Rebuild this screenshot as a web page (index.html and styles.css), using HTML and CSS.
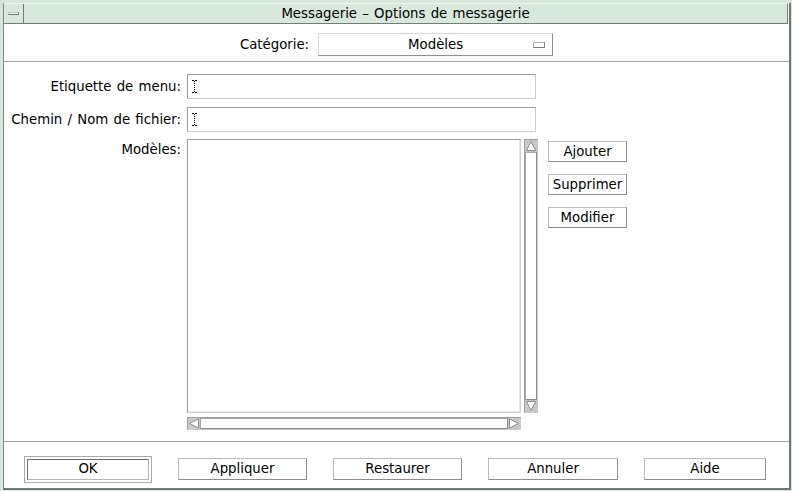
FILE: index.html
```html
<!DOCTYPE html>
<html lang="fr">
<head>
<meta charset="utf-8">
<title>Messagerie – Options de messagerie</title>
<link rel="stylesheet" href="styles.css">
</head>
<body>
<div class="window">
  <div class="panel">
    <div class="titlebar">
      <div class="menu-btn"><span class="dash"></span></div>
      <div class="title">Messagerie – Options de messagerie</div>
    </div>

    <div class="category-row">
      <span class="cat-label">Catégorie:</span>
      <div class="dropdown">
        <span class="dd-text">Modèles</span>
        <span class="dd-icon"></span>
      </div>
    </div>

    <div class="sep"></div>

    <div class="form">
      <div class="label row1">Etiquette de menu:</div>
      <div class="field row1"><svg class="ibeam" width="5" height="13" viewBox="0 0 5 13"><path d="M0 0h2v1H0zM3 0h2v1H3zM2 1h1v1H2zM2 3h1v1H2zM2 5h1v1H2zM2 7h1v1H2zM2 9h1v1H2zM2 11h1v1H2zM0 12h2v1H0zM3 12h2v1H3z" fill="#000"/></svg></div>

      <div class="label">Chemin / Nom de fichier:</div>
      <div class="field"><svg class="ibeam" width="5" height="13" viewBox="0 0 5 13"><path d="M0 0h2v1H0zM3 0h2v1H3zM2 1h1v1H2zM2 3h1v1H2zM2 5h1v1H2zM2 7h1v1H2zM2 9h1v1H2zM2 11h1v1H2zM0 12h2v1H0zM3 12h2v1H3z" fill="#000"/></svg></div>

      <div class="label label-top">Modèles:</div>
      <div class="list-row">
        <div class="lists">
          <div class="listbox"></div>
          <div class="vscroll">
            <div class="arrow-v"><svg width="12" height="12" viewBox="0 0 12 12"><polygon points="6,1.5 10.5,10.5 1.5,10.5" fill="#fff" stroke="#8e8e8e" stroke-width="1"/></svg></div>
            <div class="thumb-v"></div>
            <div class="arrow-v"><svg width="12" height="12" viewBox="0 0 12 12"><polygon points="1.5,1.5 10.5,1.5 6,10.5" fill="#fff" stroke="#8e8e8e" stroke-width="1"/></svg></div>
          </div>
          <div class="hscroll">
            <div class="arrow-h"><svg width="12" height="11" viewBox="0 0 12 11"><polygon points="1.5,5.5 10.5,1 10.5,10" fill="#fff" stroke="#8e8e8e" stroke-width="1"/></svg></div>
            <div class="thumb-h"></div>
            <div class="arrow-h"><svg width="12" height="11" viewBox="0 0 12 11"><polygon points="1.5,1 10.5,5.5 1.5,10" fill="#fff" stroke="#8e8e8e" stroke-width="1"/></svg></div>
          </div>
        </div>
        <div class="side-buttons">
          <button class="btn side">Ajouter</button>
          <button class="btn side">Supprimer</button>
          <button class="btn side">Modifier</button>
        </div>
      </div>
    </div>

    <div class="sep"></div>

    <div class="actions">
      <div class="default-ring"><button class="btn ok">OK</button></div>
      <button class="btn w129">Appliquer</button>
      <button class="btn w129">Restaurer</button>
      <button class="btn w130">Annuler</button>
      <button class="btn w122">Aide</button>
    </div>
  </div>
</div>
</body>
</html>
```

FILE: styles.css
```css
* { box-sizing: border-box; }

html, body {
  margin: 0;
  padding: 0;
  background: #d7e6da;
}

body {
  font-family: "DejaVu Sans", "Liberation Sans", sans-serif;
  font-size: 13.3px;
  word-spacing: 1px;
  color: #000;
}

.window {
  width: 792px;
  height: 491px;
  background: #d7e6da;
  padding: 3px 1px 1px 3px;
  display: flex;
}

.panel {
  flex: 1;
  display: flex;
  flex-direction: column;
  background: #fff;
  border-left: 1px solid #7f8c83;
  border-right: 2px solid #6d7a71;
  border-bottom: 2px solid #6d7a71;
}

/* Title bar */
.titlebar {
  height: 21px;
  display: flex;
  background: #d9e8dc;
  border-top: 1px solid #eef5ef;
  border-bottom: 1px solid #6f7d74;
  border-right: 1px solid #6f7d74;
  margin-right: 1px;
}

.menu-btn {
  width: 20px;
  border-right: 1px solid #6f7d74;
  display: flex;
  align-items: center;
  justify-content: center;
}

.dash {
  width: 11px;
  height: 3px;
  background: #f4f8f5;
  border-bottom: 1px solid #6f7d74;
  border-right: 1px solid #6f7d74;
  border-top: 1px solid #b9c7bd;
  border-left: 1px solid #b9c7bd;
}

.title {
  flex: 1;
  text-align: center;
  line-height: 19px;
  white-space: nowrap;
}

/* Category */
.category-row {
  height: 37px;
  padding: 9px 0 5px;
  display: flex;
  justify-content: center;
  align-items: center;
  gap: 9px;
}

.dropdown {
  width: 235px;
  height: 23px;
  display: flex;
  align-items: center;
  border: 1px solid;
  border-color: #d8d8d8 #8f8f8f #8f8f8f #d8d8d8;
  padding-left: 19px;
}

.dd-text {
  flex: 1;
  text-align: center;
}

.dd-icon {
  width: 12px;
  height: 6px;
  margin-right: 7px;
  border: 1px solid;
  border-color: #b0b0b0 #7c7c7c #7c7c7c #b0b0b0;
  background: #fff;
}

.sep {
  height: 1px;
  background: #a3a3a3;
  flex: none;
}

/* Form */
.form {
  flex: 1;
  padding-top: 12px;
  display: grid;
  grid-template-columns: 177px auto;
  grid-auto-rows: auto;
  column-gap: 6px;
  row-gap: 7px;
  align-content: start;
  align-items: center;
  overflow: hidden;
}

.row1 { margin-bottom: 1px; }

.label {
  text-align: right;
  white-space: nowrap;
}

.label-top {
  align-self: start;
  padding-top: 3px;
}

.field {
  width: 349px;
  height: 25px;
  border: 1px solid;
  border-color: #9a9a9a #cdcdcd #cdcdcd #9a9a9a;
  display: flex;
  align-items: center;
  padding-left: 4px;
}

.list-row {
  display: flex;
  align-items: flex-start;
}

.lists {
  display: grid;
  grid-template-columns: 334px 14px;
  grid-template-rows: 274px 13px;
  column-gap: 3px;
  row-gap: 4px;
}

.listbox {
  border: 1px solid;
  border-color: #9a9a9a #cfcfcf #cfcfcf #9a9a9a;
  box-shadow: inset -1px -1px 0 #e6e6e6;
  background: #fff;
}

.vscroll {
  display: flex;
  flex-direction: column;
  background: #c9c9c9;
  border: 1px solid;
  border-color: #9e9e9e #c9c9c9 #c9c9c9 #9e9e9e;
}

.arrow-v {
  height: 12px;
  display: flex;
  align-items: center;
  justify-content: center;
}

.arrow-v svg, .arrow-h svg { display: block; }

.thumb-v {
  flex: 1;
  background: #fff;
  border: 1px solid;
  border-color: #a8a8a8 #8a8a8a #8a8a8a #a8a8a8;
}

.hscroll {
  display: flex;
  background: #c9c9c9;
  border: 1px solid;
  border-color: #9e9e9e #c9c9c9 #c9c9c9 #9e9e9e;
}

.arrow-h {
  width: 12px;
  display: flex;
  align-items: center;
  justify-content: center;
}

.thumb-h {
  flex: 1;
  background: #fff;
  border: 1px solid;
  border-color: #a8a8a8 #8a8a8a #8a8a8a #a8a8a8;
}

.side-buttons {
  margin-left: 10px;
  padding-top: 2px;
  display: flex;
  flex-direction: column;
  gap: 12px;
}

/* Buttons */
.btn {
  font: inherit;
  word-spacing: inherit;
  color: #000;
  background: #fff;
  border: 1px solid;
  border-color: #b9b9b9 #8c8c8c #8c8c8c #b9b9b9;
  padding: 0;
  margin: 0;
  line-height: 1;
  display: flex;
  align-items: center;
  justify-content: center;
}

.side {
  width: 79px;
  height: 21px;
}

.actions {
  height: 46px;
  flex: none;
  padding: 14px 0 6px 20px;
  display: flex;
  align-items: center;
  gap: 26px;
}

.default-ring {
  width: 128px;
  height: 27px;
  border: 1px solid #a9a9a9;
  padding: 2px;
  display: flex;
}

.ok {
  flex: 1;
  border-color: #6e6e6e #b5b5b5 #b5b5b5 #6e6e6e;
}

.w129 { width: 129px; height: 22px; }
.w130 { width: 130px; height: 22px; }
.w122 { width: 122px; height: 22px; }
```
